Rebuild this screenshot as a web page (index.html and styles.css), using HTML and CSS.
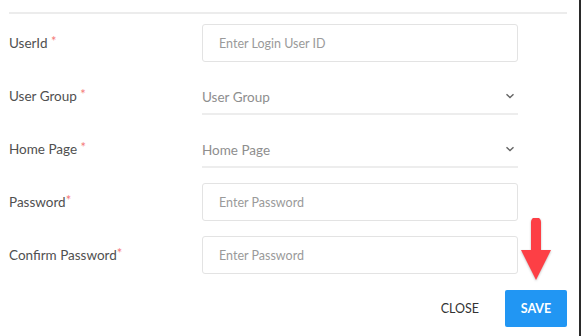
FILE: index.html
```html
<!DOCTYPE html>
<html lang="en">
<head>
    <meta charset="UTF-8">
    <meta name="viewport" content="width=device-width, initial-scale=1.0">
    <title>Add User</title>
    <link rel="stylesheet" href="styles.css">
</head>
<body>
    <div class="frame">
        <div class="modal">
            <div class="divider"></div>

            <form class="user-form" onsubmit="return false">
                <label class="field-label" for="userId">UserId <span class="req">*</span></label>
                <input class="text-input" id="userId" type="text" placeholder="Enter Login User ID">

                <label class="field-label" for="userGroup">User Group <span class="req">*</span></label>
                <div class="select-box" id="userGroup">
                    <span class="select-text">User Group</span>
                    <svg class="chevron" width="10" height="6" viewBox="0 0 10 6"><path d="M1.5 1.2 L5 4.6 L8.5 1.2" fill="none" stroke="#666" stroke-width="1.4"/></svg>
                </div>

                <label class="field-label" for="homePage">Home Page <span class="req">*</span></label>
                <div class="select-box" id="homePage">
                    <span class="select-text">Home Page</span>
                    <svg class="chevron" width="10" height="6" viewBox="0 0 10 6"><path d="M1.5 1.2 L5 4.6 L8.5 1.2" fill="none" stroke="#666" stroke-width="1.4"/></svg>
                </div>

                <label class="field-label" for="password">Password<span class="req">*</span></label>
                <input class="text-input" id="password" type="password" placeholder="Enter Password">

                <label class="field-label" for="confirmPassword">Confirm Password<span class="req">*</span></label>
                <input class="text-input" id="confirmPassword" type="password" placeholder="Enter Password">
            </form>

            <div class="actions">
                <button class="btn-close" type="button">CLOSE</button>
                <button class="btn-save" type="button">SAVE</button>
                <!-- red pointer over the save button -->
                <svg class="pointer" width="34" height="64" viewBox="0 0 34 64">
                    <path d="M17 4 L17 34" stroke="#fd3f45" stroke-width="10" stroke-linecap="round"/>
                    <path d="M2 32 L32 32 L17 62 Z" fill="#fd3f45"/>
                </svg>
            </div>
        </div>
    </div>
</body>
</html>
```

FILE: styles.css
```css
html, body {
    margin: 0;
    padding: 0;
    background: #fff;
}

body {
    font-family: Lato, "Open Sans", Arial, sans-serif;
    color: #444;
}

.frame {
    width: 579px;
    height: 336px;
    border-right: 2px solid #2a2a2a;
}

.modal {
    width: 558px;
    padding: 12px 0 0 9px;
}

.divider {
    height: 2px;
    background: #ececec;
    margin-bottom: 10px;
}

.user-form {
    display: grid;
    grid-template-columns: 193px 316px;
    grid-auto-rows: 38px;
    row-gap: 15px;
    align-items: center;
}

.field-label {
    font-size: 13.5px;
    color: #505050;
    align-self: start;
    padding-top: 9px;
}

.req {
    color: #f47a7a;
    font-size: 13px;
    vertical-align: 2px;
}

.text-input {
    box-sizing: border-box;
    height: 38px;
    width: 316px;
    border: 1px solid #e3e3e3;
    border-radius: 3px;
    padding: 0 16px;
    font-family: inherit;
    font-size: 12.5px;
    color: #444;
    outline: none;
}

.text-input::placeholder {
    color: #9a9a9a;
}

.select-box {
    box-sizing: border-box;
    height: 38px;
    border-bottom: 2px solid #ededed;
    display: flex;
    align-items: center;
    justify-content: space-between;
    padding: 3px 3px 0 0;
}

.select-text {
    font-size: 13.5px;
    color: #8e8e8e;
}

.chevron {
    margin-top: -2px;
}

.actions {
    position: relative;
    display: flex;
    justify-content: flex-end;
    align-items: center;
    gap: 26px;
    margin-top: 16px;
}

.btn-close {
    background: none;
    border: none;
    font-family: inherit;
    font-size: 12.5px;
    color: #333;
    padding: 0;
    cursor: pointer;
}

.btn-save {
    width: 62px;
    height: 37px;
    background: #2196f3;
    color: #fff;
    border: none;
    border-radius: 2px;
    font-family: inherit;
    font-size: 12.5px;
    font-weight: bold;
    cursor: pointer;
}

.pointer {
    position: absolute;
    right: 14px;
    bottom: 45px;
    filter: drop-shadow(0 1px 1px rgba(0,0,0,0.25));
}
```
